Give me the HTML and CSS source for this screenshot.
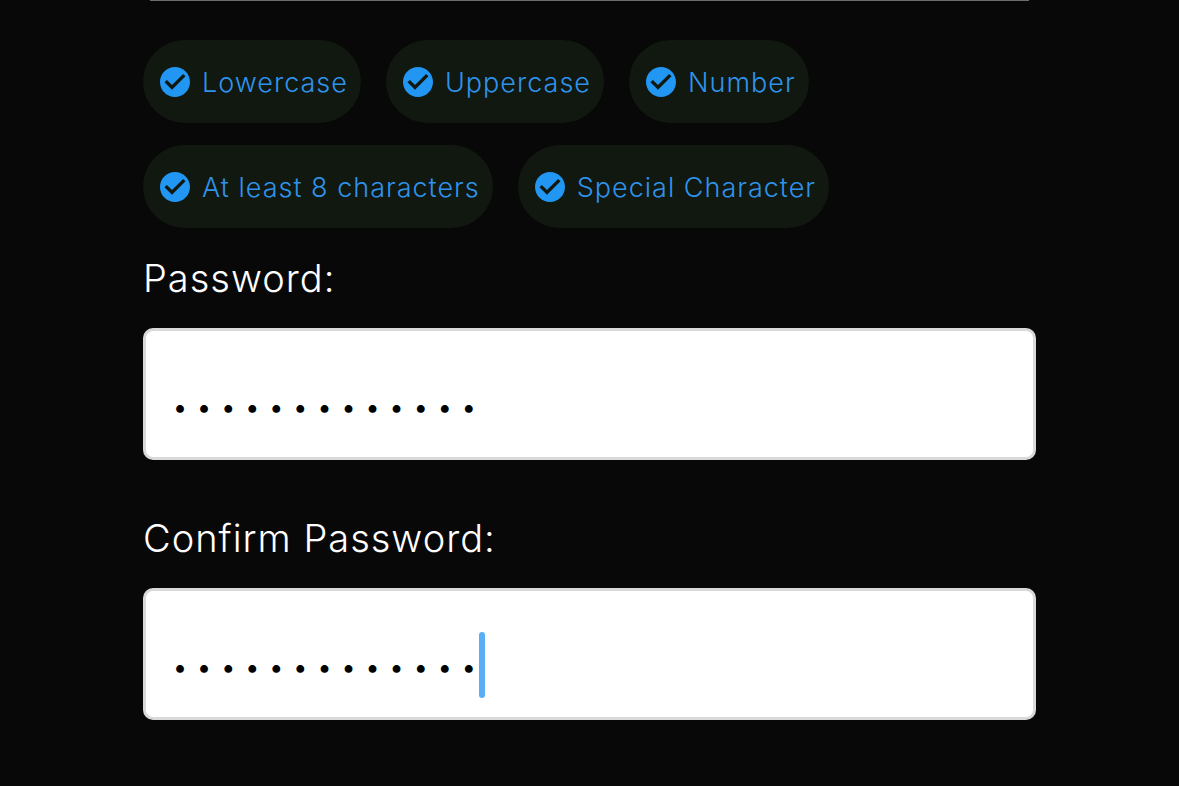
FILE: index.html
```html
<!DOCTYPE html>
<html lang="en">
<head>
<meta charset="utf-8">
<meta name="viewport" content="width=device-width, initial-scale=1">
<title>Set password</title>
<link rel="stylesheet" href="styles.css">
</head>
<body>
<svg class="symbols" aria-hidden="true">
  <symbol id="check" viewBox="2 2 20 20"><path d="M12 2C6.48 2 2 6.48 2 12s4.48 10 10 10 10-4.480 10-10S17.520 2 12 2zm-2 15.200l-5-5 1.600-1.600L10 14l7.400-7.400L19 8.200l-9 9z"/></symbol>
</svg>
<form class="form">
  <div class="divider"></div>
  <ul class="rules">
    <li class="rule"><svg class="rule-icon" aria-hidden="true"><use href="#check"/></svg><span class="rule-text">Lowercase</span></li>
    <li class="rule"><svg class="rule-icon" aria-hidden="true"><use href="#check"/></svg><span class="rule-text">Uppercase</span></li>
    <li class="rule"><svg class="rule-icon" aria-hidden="true"><use href="#check"/></svg><span class="rule-text">Number</span></li>
    <li class="rule"><svg class="rule-icon" aria-hidden="true"><use href="#check"/></svg><span class="rule-text">At least 8 characters</span></li>
    <li class="rule"><svg class="rule-icon" aria-hidden="true"><use href="#check"/></svg><span class="rule-text">Special Character</span></li>
  </ul>
  <div class="field">
    <label class="label" for="password">Password:</label>
    <div class="box"><input class="input" id="password" type="password" value="Abcdefgh1234!"></div>
  </div>
  <div class="field">
    <label class="label" for="confirm">Confirm Password:</label>
    <div class="box"><input class="input" id="confirm" type="password" value="Abcdefgh1234!"><span class="caret"></span></div>
  </div>
</form>
</body>
</html>
```
FILE: styles.css
```css
* { box-sizing: border-box; }

body {
  margin: 0;
  background: #080808;
  color: #fff;
  font-family: Inter, "Liberation Sans", sans-serif;
  font-weight: 350;
  letter-spacing: 1px;
}

.symbols { position: absolute; width: 0; height: 0; }

.form { padding: 0 143px 64px; }

.divider {
  height: 1px;
  margin: 0 7px 39px;
  background: #6c6e6d;
}

.rules {
  display: flex;
  flex-wrap: wrap;
  gap: 22px 25px;
  margin: 0;
  padding: 0;
  list-style: none;
}

.rule {
  display: flex;
  align-items: center;
  gap: 12px;
  padding: 24px 13px 24px 17px;
  border-radius: 42px;
  background: #10180f;
  color: #2f92ea;
  font-size: 27px;
  line-height: 33px;
}

.rule-text { padding-top: 2px; }

.rule-icon {
  width: 30px;
  height: 30px;
  fill: #2196f3;
}

.field { margin-top: 26px; }
.field + .field { margin-top: 54px; }

.label {
  display: block;
  margin-bottom: 26px;
  font-size: 38px;
  line-height: 48px;
}

.box { position: relative; }

.input {
  display: block;
  width: 100%;
  height: 132px;
  padding: 26px 27px 0;
  border: 3px solid #d9d9d9;
  border-radius: 10px;
  outline: 0;
  background: #fff;
  color: #000;
  font: 400 25px Inter, sans-serif;
  letter-spacing: 10px;
}

.caret {
  position: absolute;
  top: 44px;
  left: 336px;
  width: 6px;
  height: 66px;
  border-radius: 3px;
  background: #5aaef5;
}
```
